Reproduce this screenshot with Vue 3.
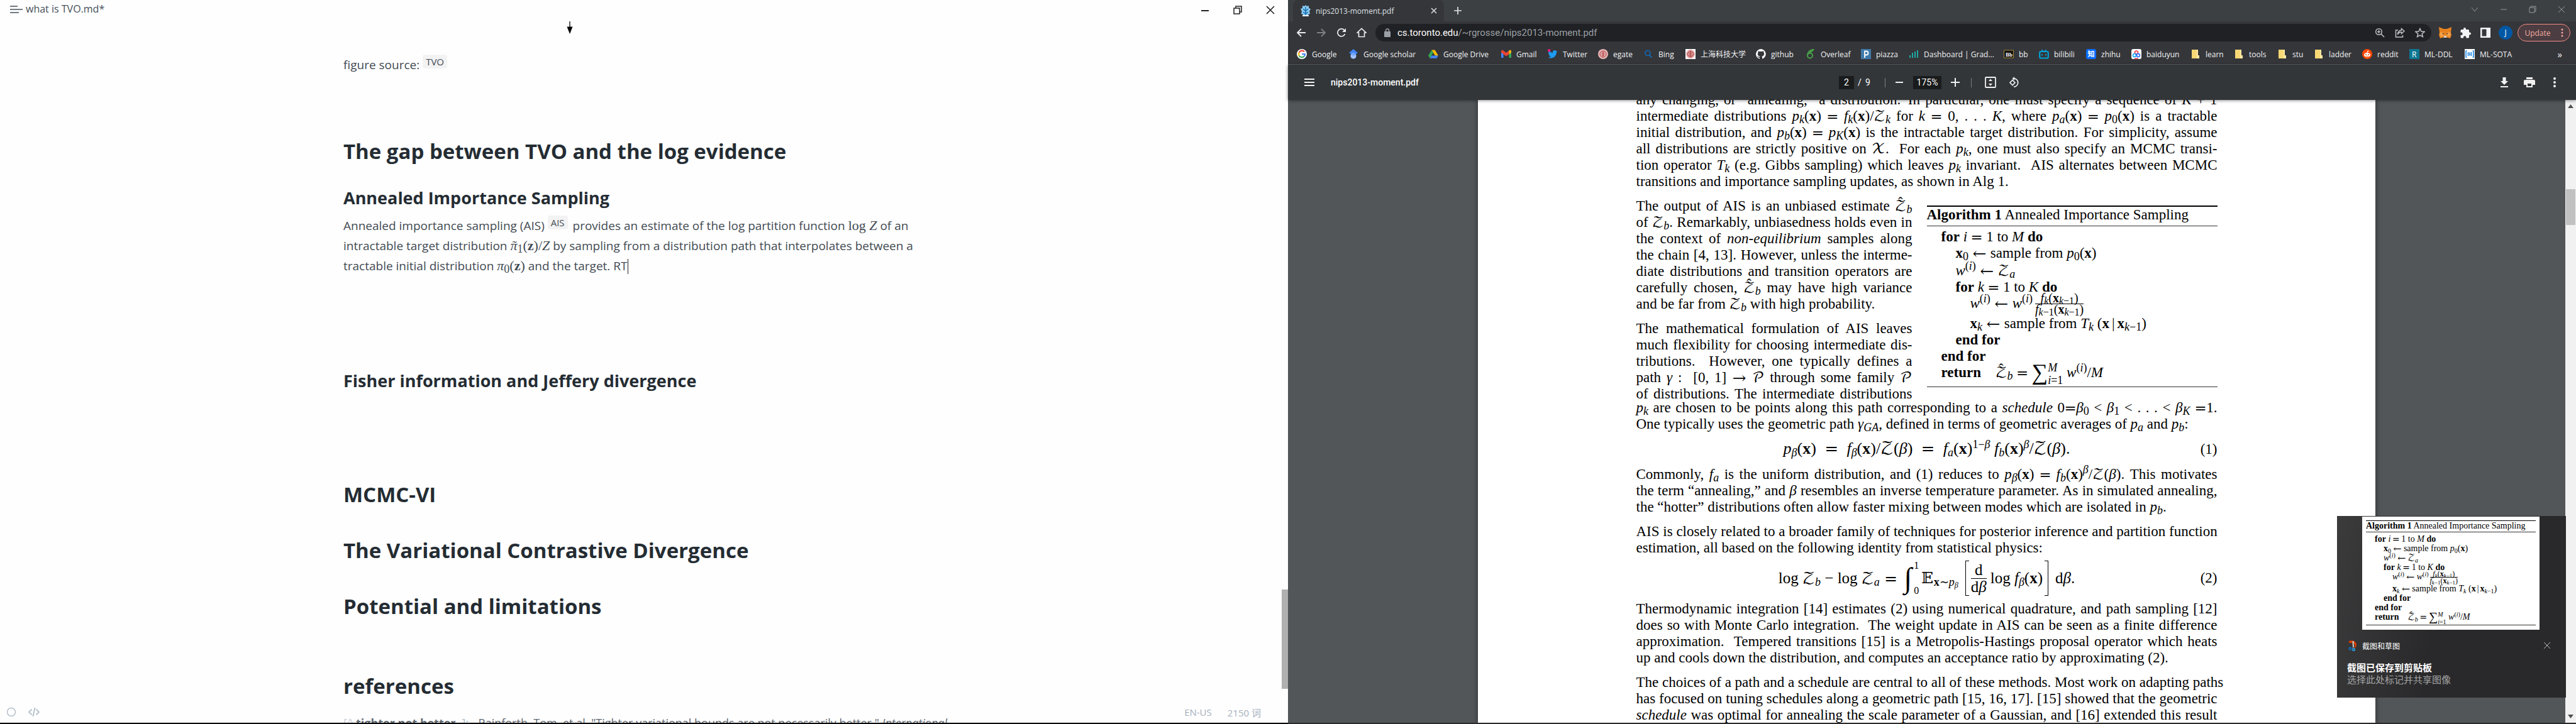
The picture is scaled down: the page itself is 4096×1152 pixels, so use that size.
<script setup>
const bookmarks = [
  { name: 'Google', w: 82, icon: '<circle cx="8" cy="8" r="8" fill="#fff"/><path d="M12 4.4A5 5 0 0 0 3.6 5.6" stroke="#ea4335" stroke-width="2.2" fill="none"/><path d="M3.6 5.6a5 5 0 0 0 0 4.8" stroke="#fbbc05" stroke-width="2.2" fill="none"/><path d="M3.6 10.4a5 5 0 0 0 7.9 1.3" stroke="#34a853" stroke-width="2.2" fill="none"/><path d="M11.5 11.7A5 5 0 0 0 13 8H8" stroke="#4285f4" stroke-width="2.2" fill="none"/>' },
  { name: 'Google scholar', w: 127, icon: '<path d="M8 0l7 6-7 5-7-5z" fill="#4285f4"/><circle cx="8" cy="11" r="4.6" fill="#a0c3ff"/><path d="M3.8 8.8a4.6 4.6 0 0 1 8.4 0L8 11z" fill="#76a7fa"/>' },
  { name: 'Google Drive', w: 116, icon: '<path d="M5.4 1.5h5.2L16 10.6h-5.1z" fill="#fbbc04"/><path d="M5.4 1.5L0 10.6l2.6 4.2L8 5.8z" fill="#34a853"/><path d="M5.1 10.6H16l-2.6 4.2H2.6z" fill="#4285f4"/>' },
  { name: 'Gmail', w: 74, icon: '<path d="M0 3.5V13a1 1 0 0 0 1 1h2.6V6.5z" fill="#4285f4"/><path d="M16 3.5V13a1 1 0 0 1-1 1h-2.6V6.5z" fill="#34a853"/><path d="M0 3.6C0 1.800 2 1.300 3.200 2.200L8 6l4.800-3.800C14 1.300 16 1.800 16 3.600v2L8 11.400 0 5.600z" fill="#ea4335"/><path d="M12.400 2.500C14 1.300 16 1.800 16 3.600v2l-3.600 2.600z" fill="#fbbc04"/>' },
  { name: 'Twitter', w: 80, icon: '<path d="M15.500 4.200l-1.600.8c0 5.500-4 9.500-8.900 9.500-1.600 0-3.200-.5-4.500-1.300 1.700.1 3.200-.4 4.400-1.300-1.300-.1-2.400-1-2.800-2.200h1.200C2 9.300 1 8 1 6.500l1.300.4C1 6 .6 4 1.500 2.600 3.100 4.600 5.300 5.700 8 5.900 7.500 3.800 9 2 11 2c.9 0 1.700.4 2.200 1z" fill="#1d9bf0"/><circle cx="2.200" cy="2.200" r="2.200" fill="#f91880"/>' },
  { name: 'egate', w: 72, icon: '<circle cx="8" cy="8" r="8" fill="#e8b7b7"/><circle cx="8" cy="8" r="5" fill="none" stroke="#a33" stroke-width="1"/><path d="M8 4v8M5.500 6.500h5M5.500 9.500h5" stroke="#a33"/>' },
  { name: 'Bing', w: 67, icon: '<circle cx="7" cy="6.500" r="4" fill="none" stroke="#0f6cbd" stroke-width="1.600"/><path d="M10 9.500l3 4" stroke="#0f6cbd" stroke-width="1.800"/>' },
  { name: '上海科技大学', w: 112, icon: '<path d="M0 0h16v16H0z" fill="#fff"/><circle cx="8" cy="8" r="7" fill="#e3a9a9"/><circle cx="8" cy="8" r="4.500" fill="none" stroke="#a33"/><path d="M8 4v8M5.500 6.500h5M5.500 9.500h5" stroke="#a33"/>' },
  { name: 'github', w: 79, icon: '<path d="M8 0a8 8 0 0 0-2.500 15.600c.4.1.5-.2.5-.4v-1.500c-2.200.5-2.700-1-2.700-1-.4-.9-.9-1.200-.9-1.200-.7-.5.100-.5.100-.5.8.100 1.200.8 1.200.8.7 1.200 1.900.9 2.300.7.100-.5.300-.9.500-1.100-1.800-.2-3.600-.9-3.600-4 0-.9.300-1.600.8-2.100-.1-.2-.4-1 .1-2.100 0 0 .7-.2 2.200.8a7.500 7.500 0 0 1 4 0c1.500-1 2.200-.8 2.200-.8.4 1.100.2 1.900.1 2.100.5.600.8 1.300.8 2.100 0 3.100-1.900 3.800-3.700 4 .3.300.6.800.6 1.500v2.200c0 .2.100.5.500.4A8 8 0 0 0 8 0z" fill="#fff"/>' },
  { name: 'Overleaf', w: 88, icon: '<circle cx="7" cy="10.500" r="4" fill="none" stroke="#46a247" stroke-width="2"/><path d="M3.200 10C3 5 6 2 12.500.8 11 3.500 8.500 4 6.500 6" fill="none" stroke="#46a247" stroke-width="2"/>' },
  { name: 'piazza', w: 76, icon: '<path d="M0 0h16v16H0z" fill="#3e7aab"/><path d="M6 14V3.500h2.500a3 3 0 0 1 0 6H6" fill="none" stroke="#fff" stroke-width="1.800"/>' },
  { name: 'Dashboard | Grad...', w: 151, icon: '<path d="M1 10h2v4H1zM5 6h2v8H5zM9 4h2v10H9zM13 2h2v12h-2z" fill="#1fa8a4"/>' },
  { name: 'bb', w: 56, icon: '<path d="M.5 2h15v12H.5z" fill="#111" stroke="#a98a3c"/><text x="3" y="11.500" font-size="9" font-weight="700" fill="#fff" font-family="Liberation Serif">Bb</text>' },
  { name: 'bilibili', w: 75, icon: '<rect x="1.200" y="4" width="13.600" height="10.500" rx="2" fill="none" stroke="#00a1d6" stroke-width="2.200"/><path d="M4.500 1l2 2.500M11.500 1l-2 2.500M5 8v2.500M11 8v2.500" stroke="#00a1d6" stroke-width="1.800"/>' },
  { name: 'zhihu', w: 72, icon: '<rect width="16" height="16" rx="3" fill="#0a6cff"/><text x="2.500" y="12" font-size="11" font-weight="700" fill="#fff" font-family="Noto Sans CJK SC">知</text>' },
  { name: 'baiduyun', w: 94, icon: '<rect width="16" height="16" rx="3" fill="#fff"/><circle cx="8" cy="5.500" r="2.500" fill="none" stroke="#e34" stroke-width="1.500"/><circle cx="5" cy="10" r="2.500" fill="none" stroke="#06a7ff" stroke-width="1.500"/><circle cx="11" cy="10" r="2.500" fill="none" stroke="#2a6cff" stroke-width="1.500"/><path d="M5 15h6" stroke="#e34" stroke-width="1.500"/>' },
  ...[['learn', 69], ['tools', 69], ['stu', 58], ['ladder', 77]].map(([name, w]) => ({
    name, w, icon: '<path d="M2 1h10v9h2v5H2z" fill="#f8d775"/><path d="M12 1v9h2v5h-4V1z" fill="#ffe9a2"/>',
  })),
  { name: 'reddit', w: 75, icon: '<circle cx="8" cy="8" r="8" fill="#ff4500"/><ellipse cx="8" cy="9.300" rx="5" ry="3.600" fill="#fff"/><circle cx="6" cy="8.800" r="1" fill="#ff4500"/><circle cx="10" cy="8.800" r="1" fill="#ff4500"/><path d="M8 5.800l.7-2.800 2.300.6" stroke="#fff" fill="none"/><path d="M6 11q2 1.200 4 0" stroke="#ff4500" fill="none" stroke-width=".8"/>' },
  { name: 'ML-DDL', w: 88, icon: '<path d="M0 0h16v16H0z" fill="#0c7792"/><text x="4" y="12.500" font-size="12" fill="#fff" font-family="Open Sans">R</text>' },
  { name: 'ML-SOTA', w: 78, icon: '<path d="M0 0h16v16H0z" fill="#fff"/><path d="M3.500 3H2v10h1.500M12.500 3H14v10h-1.500M5.500 5v6M8 5.500v5M10.500 5v6" stroke="#1e88e5" stroke-width="1.600" fill="none"/>' },
]

const algorithm = `
<div class="a-title"><b>Algorithm 1</b> Annealed Importance Sampling</div>
<div class="a-body">
<div class="a-row"><b>for</b> <i>i</i><u>=</u>1 to <i>M</i> <b>do</b></div>
<div class="a-row in1"><b>x</b><sub>0</sub><u>←</u>sample from <i>p</i><sub>0</sub>(<b>x</b>)</div>
<div class="a-row in1 tall"><i>w</i><sup>(<i>i</i>)</sup><u>←</u><em>𝒵</em><sub><i>a</i></sub></div>
<div class="a-row in1"><b>for</b> <i>k</i><u>=</u>1 to <i>K</i> <b>do</b></div>
<div class="a-row in2 deep"><i>w</i><sup>(<i>i</i>)</sup><u>←</u><i>w</i><sup>(<i>i</i>)</sup><span class="frac"><span><i>f</i><sub><i>k</i></sub>(<b>x</b><sub><i>k</i>−1</sub>)</span><span><i>f</i><sub><i>k</i>−1</sub>(<b>x</b><sub><i>k</i>−1</sub>)</span></span></div>
<div class="a-row in2"><b>x</b><sub><i>k</i></sub><u>←</u>sample from <i>T</i><sub><i>k</i></sub> (<b>x</b><s>|</s><b>x</b><sub><i>k</i>−1</sub>)</div>
<div class="a-row in1"><b>end for</b></div>
<div class="a-row"><b>end for</b></div>
<div class="a-row"><b>return</b>&emsp;<span class="hat"><em>𝒵</em></span><sub><i>b</i></sub><u>=</u><span class="sum">∑</span><span class="lim"><span><i>M</i></span><span><i>i</i>=1</span></span> <i>w</i><sup>(<i>i</i>)</sup>/<i>M</i></div>
</div>`
</script>

<template>
  <div class="screen">
    <section class="editor">
      <header class="ed-bar">
        <button class="ed-menu" aria-label="Menu">
          <svg width="20" height="16" viewBox="0 0 20 16"><path d="M0 3h12M0 8h20M0 13h14" stroke="#444f59" stroke-width="1.500" /></svg>
        </button>
        <span class="ed-name">what is TVO.md*</span>
        <div class="ed-win">
          <button aria-label="Minimize"><svg width="16" height="16" viewBox="0 0 16 16"><path d="M2 9h12" stroke="#222" stroke-width="2" /></svg></button>
          <button aria-label="Restore"><svg width="16" height="16" viewBox="0 0 16 16"><path d="M2 5h9v9H2zM5 5V2h9v9h-3" fill="none" stroke="#222" stroke-width="1.500" /></svg></button>
          <button aria-label="Close"><svg width="16" height="16" viewBox="0 0 16 16"><path d="M2 2l12 12M14 2L2 14" stroke="#222" stroke-width="1.600" /></svg></button>
        </div>
      </header>
      <div class="ed-scroll">
        <article>
          <figure><svg width="12" height="20" viewBox="0 0 12 20"><path d="M6 0v10" stroke="#000" stroke-width="1.300" /><path d="M1.500 8.500h9L6 20z" /></svg></figure>
          <p class="source">figure source: <span class="chip">TVO</span></p>
          <h2>The gap between TVO and the log evidence</h2>
          <h3>Annealed Importance Sampling</h3>
          <p class="ais">
            <span>Annealed importance sampling (AIS) <span class="chip">AIS</span> provides an estimate of the log partition function <span class="m">log <i>Z</i></span> of an</span>
            <span>intractable target distribution <span class="m"><span class="tilde"><i>π</i></span><sub>1</sub>(<b>z</b>)/<i>Z</i></span> by sampling from a distribution path that interpolates between a</span>
            <span>tractable initial distribution <span class="m"><i>π</i><sub>0</sub>(<b>z</b>)</span> and the target. RT<span class="caret"></span></span>
          </p>
          <h3 class="fisher">Fisher information and Jeffery divergence</h3>
          <h2>MCMC-VI</h2>
          <h2>The Variational Contrastive Divergence</h2>
          <h2 class="limits">Potential and limitations</h2>
          <h2>references</h2>
          <p class="ref"><span class="mark">[^</span><b>tighter not better</b><span class="mark end">]:</span>Rainforth, Tom, et al. "Tighter variational bounds are not necessarily better." <i>International</i></p>
        </article>
        <div class="ed-thumb"></div>
      </div>
      <footer class="ed-status">
        <button aria-label="Sidebar"><svg width="16" height="16" viewBox="0 0 16 16"><circle cx="8" cy="8" r="6.500" fill="none" stroke="#b7c1cb" stroke-width="1.500" /></svg></button>
        <button aria-label="Source mode"><svg width="18" height="14" viewBox="0 0 18 14"><path d="M5.500 2.500L1 7l4.500 4.500M12.500 2.500L17 7l-4.500 4.500M10.500 0L7.500 14" fill="none" stroke="#a3b0bc" stroke-width="1.500" /></svg></button>
        <span class="lang">EN-US</span>
        <span>2150 词</span>
      </footer>
    </section>

    <section class="browser">
      <header class="tabs">
        <div class="tab">
          <svg width="18" height="18" viewBox="0 0 18 18"><path d="M9 0l2 2 3-1v4l3 1-2 4 1 4-3 1v3H5v-3l-3-1 1-4-2-4 3-1V1l3 1z" fill="#8ccbf0" /><path d="M9 3v13M5 6l4 4 4-4M5 11l4 3 4-3" stroke="#1670b0" stroke-width="1.500" fill="none" /><path d="M4 16h10v2H4z" fill="#eef" /></svg>
          <span>nips2013-moment.pdf</span>
          <button aria-label="Close tab"><svg width="10" height="10" viewBox="0 0 10 10"><path d="M1 1l8 8M9 1L1 9" stroke="#dfe1e5" stroke-width="1.500" /></svg></button>
        </div>
        <button class="newtab" aria-label="New tab"><svg width="14" height="14" viewBox="0 0 14 14"><path d="M7 1v12M1 7h12" stroke="#dfe1e5" stroke-width="1.700" /></svg></button>
        <div class="win">
          <button aria-label="Search tabs"><svg width="12" height="12" viewBox="0 0 12 12"><path d="M1 3l5 6 5-6" /></svg></button>
          <button aria-label="Minimize"><svg width="12" height="12" viewBox="0 0 12 12"><path d="M1 6h10" /></svg></button>
          <button aria-label="Restore"><svg width="12" height="12" viewBox="0 0 12 12"><path d="M1 3h8v8H1zM3 3V1h8v8H9" /></svg></button>
          <button aria-label="Close"><svg width="12" height="12" viewBox="0 0 12 12"><path d="M1 1l10 10M11 1L1 11" /></svg></button>
        </div>
      </header>

      <nav class="toolbar">
        <button aria-label="Back"><svg width="16" height="16" viewBox="0 0 16 16"><path d="M15 8H2M8 2L2 8l6 6" fill="none" stroke="#e8eaed" stroke-width="1.800" /></svg></button>
        <button aria-label="Forward"><svg width="16" height="16" viewBox="0 0 16 16"><path d="M1 8h13M8 2l6 6-6 6" fill="none" stroke="#7d8084" stroke-width="1.800" /></svg></button>
        <button aria-label="Reload"><svg width="16" height="16" viewBox="0 0 16 16"><path d="M13.500 10A6 6 0 1 1 12.500 4l1.500 2" fill="none" stroke="#e8eaed" stroke-width="1.800" /><path d="M15 1v6H9z" fill="#e8eaed" /></svg></button>
        <button aria-label="Home"><svg width="16" height="16" viewBox="0 0 16 16"><path d="M1 8l7-6.500L15 8h-2.500v6.500h-9V8z" fill="none" stroke="#e8eaed" stroke-width="1.700" /></svg></button>
        <div class="omni">
          <svg width="12" height="14" viewBox="0 0 12 14"><path d="M1 5h10v9H1z" fill="#9aa0a6" /><path d="M3.500 5V3.500a2.500 2.500 0 0 1 5 0V5" fill="none" stroke="#9aa0a6" stroke-width="1.500" /></svg>
          <a href="#"><b>cs.toronto.edu</b>/~rgrosse/nips2013-moment.pdf</a>
          <button aria-label="Zoom"><svg width="16" height="16" viewBox="0 0 16 16"><circle cx="6.500" cy="6.500" r="4.800" /><path d="M10 10l5 5M4 6.500h5M6.500 4v5" /></svg></button>
          <button aria-label="Share"><svg width="16" height="16" viewBox="0 0 16 16"><path d="M5 4H1.500v11h11v-3" /><path d="M10.500 1.500L15 5.500l-4.500 4v-2.500C7.500 7 5.500 8.500 4.500 11 4.500 7 7 4.500 10.500 4z" /></svg></button>
          <button aria-label="Bookmark"><svg width="16" height="16" viewBox="0 0 16 16"><path d="M8 1.500l2 4.600 5 .4-3.800 3.200 1.200 4.800L8 12l-4.400 2.500 1.200-4.800L1 6.500l5-.4z" /></svg></button>
        </div>
        <button aria-label="MetaMask"><svg width="20" height="18" viewBox="0 0 20 18"><path d="M0 0l7.500 3h5L20 0l-1 9 1 4-2 5-5-1.500h-6L2 18l-2-5 1-4z" fill="#e8821e" /><path d="M1 9l5-1 2 5-5 3zM19 9l-5-1-2 5 5 3z" fill="#f6a14a" /><path d="M5 9.500l3 1-1 1.500zM15 9.500l-3 1 1 1.500z" fill="#333" /><path d="M8 14h4l.5 3h-5z" fill="#d8cfc8" /></svg></button>
        <button aria-label="Extensions"><svg width="18" height="18" viewBox="0 0 18 18"><path d="M16 8.500h-1V5.500A1.500 1.500 0 0 0 13.500 4H10V3a2 2 0 0 0-4 0v1H3a1.500 1.500 0 0 0-1.500 1.500V8.500h1a2.200 2.200 0 0 1 0 4.400h-1V16A1.500 1.500 0 0 0 3 17.500h3v-1a2.200 2.200 0 0 1 4.400 0v1h3.100A1.500 1.500 0 0 0 15 16v-3.500h1a2 2 0 0 0 0-4z" fill="#f1f3f4" /></svg></button>
        <button aria-label="Side panel"><svg width="16" height="16" viewBox="0 0 16 16"><path d="M0 0h16v16H0zM2.500 2.500v11h7v-11z" fill="#f1f3f4" fill-rule="evenodd" /></svg></button>
        <button aria-label="Profile"><span class="avatar">J</span></button>
        <button class="update">Update<svg width="4" height="14" viewBox="0 0 4 14"><circle cx="2" cy="2" r="1.500" /><circle cx="2" cy="7" r="1.500" /><circle cx="2" cy="12" r="1.500" /></svg></button>
      </nav>

      <nav class="marks">
        <a v-for="b in bookmarks" :key="b.name" href="#" :style="{ width: b.w + 'px' }">
          <svg width="16" height="16" viewBox="0 0 16 16" v-html="b.icon"></svg><span>{{ b.name }}</span>
        </a>
        <button class="more">»</button>
      </nav>

      <div class="pdfbar">
        <div class="pb-left">
          <button aria-label="Menu"><svg width="16" height="12" viewBox="0 0 16 12"><path d="M0 1h16M0 6h16M0 11h16" stroke="#f1f1f1" stroke-width="2" /></svg></button>
          <span>nips2013-moment.pdf</span>
        </div>
        <div class="pb-mid">
          <input class="page" value="2" aria-label="Page"><span class="slash">/</span><span class="nine">9</span>
          <i class="div"></i>
          <button class="z" aria-label="Zoom out"><svg width="12" height="12" viewBox="0 0 12 12"><path d="M0 6h12" stroke="#f1f1f1" stroke-width="2" /></svg></button>
          <input class="pct" value="175%" aria-label="Zoom level">
          <button class="z" aria-label="Zoom in"><svg width="14" height="14" viewBox="0 0 14 14"><path d="M0 7h14M7 0v14" stroke="#f1f1f1" stroke-width="2" /></svg></button>
          <i class="div"></i>
          <button class="t" aria-label="Fit"><svg width="18" height="18" viewBox="0 0 18 18"><rect x="1" y="1" width="16" height="16" rx="1" fill="none" stroke="#f1f1f1" stroke-width="1.800" /><path d="M9 3.500l3 3.500H6zM9 14.500l3-3.500H6z" fill="#f1f1f1" /></svg></button>
          <button class="t" aria-label="Rotate"><svg width="18" height="18" viewBox="0 0 18 18"><path d="M7 5.500L11 9.500l-4 4-4-4z" fill="none" stroke="#f1f1f1" stroke-width="1.700" /><path d="M9 2.800a6.700 6.700 0 0 1 0 13.400" fill="none" stroke="#f1f1f1" stroke-width="1.700" /><path d="M10 0v6L6.500 3z" fill="#f1f1f1" /></svg></button>
        </div>
        <div class="pb-right">
          <button aria-label="Download"><svg width="16" height="16" viewBox="0 0 16 16"><path d="M5.500 0h5v6H14l-6 6-6-6h3.500zM2 14h12v2H2z" /></svg></button>
          <button aria-label="Print"><svg width="18" height="16" viewBox="0 0 18 16"><path d="M4 0h10v3H4zM2 4h14a2 2 0 0 1 2 2v6h-4v4H4v-4H0V6a2 2 0 0 1 2-2zm4 6v4h6v-4z" /></svg></button>
          <button aria-label="More"><svg width="4" height="16" viewBox="0 0 4 16"><circle cx="2" cy="2" r="2" /><circle cx="2" cy="8" r="2" /><circle cx="2" cy="14" r="2" /></svg></button>
        </div>
      </div>

      <div class="viewer">
        <main class="sheet">
          <div class="col m">
            <p>
              <span>any changing, or “annealing,” a distribution.&ensp;In particular, one must specify a sequence of <i>K</i> + 1</span>
              <span>intermediate distributions <i>p</i><sub><i>k</i></sub>(<b>x</b>) <u>=</u> <i>f</i><sub><i>k</i></sub>(<b>x</b>)/<em>𝒵</em><sub><i>k</i></sub> for <i>k</i> <u>=</u> 0, . . . <i>K</i>, where <i>p</i><sub><i>a</i></sub>(<b>x</b>) <u>=</u> <i>p</i><sub>0</sub>(<b>x</b>) is a tractable</span>
              <span>initial distribution, and <i>p</i><sub><i>b</i></sub>(<b>x</b>) <u>=</u> <i>p</i><sub><i>K</i></sub>(<b>x</b>) is the intractable target distribution. For simplicity, assume</span>
              <span>all distributions are strictly positive on <em>𝒳</em>. &nbsp;For each <i>p</i><sub><i>k</i></sub>, one must also specify an MCMC transi-</span>
              <span>tion operator <i>T</i><sub><i>k</i></sub> (e.g. Gibbs sampling) which leaves <i>p</i><sub><i>k</i></sub> invariant. &nbsp;AIS alternates between MCMC</span>
              <span class="last">transitions and importance sampling updates, as shown in Alg 1.</span>
            </p>
            <div class="split">
              <div class="narrow">
                <p>
                  <span>The output of AIS is an unbiased estimate <span class="hat"><em>𝒵</em></span><sub><i>b</i></sub></span>
                  <span>of <em>𝒵</em><sub><i>b</i></sub>. Remarkably, unbiasedness holds even in</span>
                  <span>the context of <i>non-equilibrium</i> samples along</span>
                  <span>the chain [4, 13]. However, unless the interme-</span>
                  <span>diate distributions and transition operators are</span>
                  <span>carefully chosen, <span class="hat"><em>𝒵</em></span><sub><i>b</i></sub> may have high variance</span>
                  <span class="last">and be far from <em>𝒵</em><sub><i>b</i></sub> with high probability.</span>
                </p>
                <p class="flush">
                  <span>The mathematical formulation of AIS leaves</span>
                  <span>much flexibility for choosing intermediate dis-</span>
                  <span>tributions. &nbsp;However, one typically defines a</span>
                  <span>path <i>γ</i> :&nbsp; [0, 1] <u>→</u> <em>𝒫</em> through some family <em>𝒫</em></span>
                  <span>of distributions. The intermediate distributions</span>
                </p>
              </div>
              <div class="algo" v-html="algorithm"></div>
            </div>
            <p>
              <span><i>p</i><sub><i>k</i></sub> are chosen to be points along this path corresponding to a <i>schedule</i> 0<u>=</u><i>β</i><sub>0</sub> &lt; <i>β</i><sub>1</sub> &lt; . . . &lt; <i>β</i><sub><i>K</i></sub> <u>=</u>1.</span>
              <span class="last">One typically uses the geometric path <i>γ</i><sub><i>GA</i></sub>, defined in terms of geometric averages of <i>p</i><sub><i>a</i></sub> and <i>p</i><sub><i>b</i></sub>:</span>
            </p>
            <div class="eq">
              <div><i>p</i><sub><i>β</i></sub>(<b>x</b>)<u>=</u><i>f</i><sub><i>β</i></sub>(<b>x</b>)/<em>𝒵</em>(<i>β</i>)<u>=</u><i>f</i><sub><i>a</i></sub>(<b>x</b>)<sup>1−<i>β</i></sup> <i>f</i><sub><i>b</i></sub>(<b>x</b>)<sup><i>β</i></sup>/<em>𝒵</em>(<i>β</i>).</div>
              <div>(1)</div>
            </div>
            <p>
              <span>Commonly, <i>f</i><sub><i>a</i></sub> is the uniform distribution, and (1) reduces to <i>p</i><sub><i>β</i></sub>(<b>x</b>) <u>=</u> <i>f</i><sub><i>b</i></sub>(<b>x</b>)<sup><i>β</i></sup>/<em>𝒵</em>(<i>β</i>). This motivates</span>
              <span>the term “annealing,” and <i>β</i> resembles an inverse temperature parameter. As in simulated annealing,</span>
              <span class="last">the “hotter” distributions often allow faster mixing between modes which are isolated in <i>p</i><sub><i>b</i></sub>.</span>
            </p>
            <p class="tight">
              <span class="full">AIS is closely related to a broader family of techniques for posterior inference and partition function</span>
              <span class="last">estimation, all based on the following identity from statistical physics:</span>
            </p>
            <div class="eq big">
              <div>
                <span>log <em>𝒵</em><sub><i>b</i></sub> − log <em>𝒵</em><sub><i>a</i></sub><u>=</u></span>
                <span class="int">∫</span><span class="bounds"><span>1</span><span>0</span></span>
                <span><em>𝔼</em><sub><b>x</b>∼<i>p</i><small><i>β</i></small></sub></span>
                <span class="brk"><span class="dfrac"><span>d</span><span>d<i>β</i></span></span><span>log <i>f</i><sub><i>β</i></sub>(<b>x</b>)</span></span>
                <span>d<i>β</i>.</span>
              </div>
              <div>(2)</div>
            </div>
            <p>
              <span>Thermodynamic integration [14] estimates (2) using numerical quadrature, and path sampling [12]</span>
              <span>does so with Monte Carlo integration. &nbsp;The weight update in AIS can be seen as a finite difference</span>
              <span>approximation. &nbsp;Tempered transitions [15] is a Metropolis-Hastings proposal operator which heats</span>
              <span class="last">up and cools down the distribution, and computes an acceptance ratio by approximating (2).</span>
            </p>
            <p>
              <span class="full">The choices of a path and a schedule are central to all of these methods. Most work on adapting paths</span>
              <span>has focused on tuning schedules along a geometric path [15, 16, 17]. [15] showed that the geometric</span>
              <span><i>schedule</i> was optimal for annealing the scale parameter of a Gaussian, and [16] extended this result</span>
            </p>
          </div>
        </main>
        <div class="vbar">
          <svg width="17" height="20" viewBox="0 0 17 20"><path d="M8.500 7l4.500 6H4z" fill="#505050" /></svg>
          <div class="vthumb"></div>
          <svg width="17" height="20" viewBox="0 0 17 20"><path d="M8.500 13l4.500-6H4z" fill="#505050" /></svg>
        </div>
      </div>
    </section>

    <aside class="toast">
      <div class="shot"><div class="algo mini m" v-html="algorithm"></div></div>
      <div class="app">
        <svg width="14" height="17" viewBox="0 0 14 17"><path d="M1 1c6-2 12 1 12 6 0 3-2 5-4 5l1-3c1-4-3-5-9-5z" fill="#d83b01" /><path d="M6.500 1h2l.5 9-2 2z" fill="#ccc" /><circle cx="3" cy="13" r="1.800" fill="none" stroke="#0f6cbd" stroke-width="1.500" /><circle cx="8.500" cy="14.500" r="1.800" fill="none" stroke="#2aa5ea" stroke-width="1.500" /></svg>
        <span>截图和草图</span>
        <button aria-label="Dismiss"><svg width="12" height="12" viewBox="0 0 12 12"><path d="M1 1l10 10M11 1L1 11" stroke="#bbb" /></svg></button>
      </div>
      <strong>截图已保存到剪贴板</strong>
      <span class="sub">选择此处标记并共享图像</span>
    </aside>
    <div class="edge"></div>
    <div class="edge right"></div>
  </div>
</template>

<style>
body { overflow: hidden; background: #000; }
.m i, .m b { font-family: inherit; }
.m em { font: normal 400 1em "DejaVu Math TeX Gyre", serif; line-height: 0; }
.m sub, .m sup { font-size: 18px; line-height: 0; vertical-align: -4px; }
.m sup { vertical-align: 9px; }
.m u { font-family: "DejaVu Math TeX Gyre", serif; line-height: 0; text-decoration: none; padding: 0 6px; }
.m s { text-decoration: none; padding: 0 4px; }
.m .hat, .m .tilde { position: relative; display: inline-block; }
.m .hat::before { content: "ˆ"; position: absolute; left: 5px; top: -5px; }
.m .tilde::before { content: "˜"; position: absolute; left: 3px; top: 0; }

.algo { --indent: 23px; border-top: 2px solid #000; border-bottom: 1px solid #333; font: 23px/26px "Liberation Serif", serif; color: #000; white-space: nowrap; }
.a-title { padding-bottom: 4px; border-bottom: 1px solid #333; }
.a-body { padding: 4px 0 9px var(--indent); }
.a-row { height: 26px; }
.a-row.in1 { padding-left: var(--indent); }
.a-row.in2 { padding-left: calc(var(--indent) * 2); }
.a-row.tall { padding-top: 2px; }
.a-row.deep { height: 32px; }
.algo .frac, .algo .lim { display: inline-flex; flex-direction: column; vertical-align: 9px; margin: -6px 0 -20px 4px; font-size: 20px; line-height: 17px; text-align: center; }
.algo .frac > span:first-child { border-bottom: 1px solid #000; }
.algo .frac sub { font-size: 16px; vertical-align: -3px; }
.algo .lim { margin-left: 0; font-size: 18px; line-height: 20px; text-align: left; }
.algo .sum { font-size: 36px; line-height: 0; vertical-align: -4px; }

.algo.mini { --indent: 14px; border-top-width: 1px; font-size: 14px; line-height: 15px; }
.mini .a-title { padding-bottom: 2px; }
.mini .a-body { padding-top: 3px; padding-bottom: 5px; }
.mini .a-row { height: 15px; }
.mini .a-row.tall { padding-top: 0; }
.mini .a-row.deep { height: 19px; }
.mini.m sub, .mini.m sup { font-size: 10px; vertical-align: -3px; }
.mini.m sup { vertical-align: 5px; }
.mini.m u { padding: 0 3px; }
.mini.m s { padding: 0 2px; }
.mini.m .hat::before { left: 3px; top: -3px; }
.algo.mini .frac, .algo.mini .lim { vertical-align: 5px; margin: -4px 0 -12px 2px; font-size: 12px; line-height: 10px; }
.algo.mini .frac sub { font-size: 9px; vertical-align: -2px; }
.algo.mini .lim { margin-left: 0; font-size: 10px; line-height: 12px; }
.algo.mini .sum { font-size: 20px; vertical-align: -2px; }
</style>

<style scoped>
.screen { position: relative; display: grid; grid-template: minmax(0, 1fr) 2px / minmax(0, 1fr) minmax(0, 1fr); height: 100vh; overflow: hidden; font-family: "Open Sans", "Noto Sans CJK SC", sans-serif; }
button { border: 0; padding: 0; margin: 0; background: none; font: inherit; color: inherit; display: flex; align-items: center; justify-content: center; }
a { color: inherit; text-decoration: none; }
svg { flex: none; }
.edge { background: #000; }
.edge.right { background: #2a2a2d; }

.editor { position: relative; display: flex; flex-direction: column; min-height: 0; background: #fefefe; color: #434b53; }
.ed-bar { display: flex; align-items: flex-start; height: 34px; flex: none; padding-left: 16px; }
.ed-menu { height: 30px; }
.ed-name { margin-left: 5px; font-size: 16px; line-height: 28px; color: #444f59; }
.ed-win { display: flex; margin-left: auto; padding-right: 2px; }
.ed-win button { width: 52px; height: 32px; }
.ed-scroll { position: relative; flex: 1; min-height: 0; overflow: hidden; }
article { max-width: 956px; margin: 0 auto; font-size: 19px; line-height: 32px; white-space: nowrap; }
figure { margin: 0; height: 53px; display: flex; padding-left: 354px; }
p, h2, h3 { margin: 0; }
h2 { font-size: 33px; line-height: 44px; margin-top: 45px; color: #242c33; }
h3 { font-size: 27px; line-height: 36px; margin-top: 34px; color: #242c33; }
.source { margin-bottom: 100px; }
.chip { display: inline-block; padding: 0 5px; margin-right: 3px; border-radius: 4px; background: #f3f3f3; font-size: 15px; line-height: 22px; vertical-align: 6px; }
.ais { margin: 10px 0 149px; }
.ais > span { display: block; height: 32px; }
.ais .m { font: 22px/1 "Liberation Serif", serif; }
.caret { display: inline-block; width: 1px; height: 24px; margin-bottom: -6px; background: #222; }
.fisher { margin-bottom: 141px; }
.limits { margin-bottom: 83px; }
.ref { margin-top: 20px; font-size: 18px; color: #5f6870; }
.mark { display: inline-block; width: 20px; color: #c8cdd2; }
.mark.end { width: 26px; padding-left: 10px; color: #a9bccb; }
.ed-thumb { position: absolute; right: 0; top: 904px; width: 10px; height: 158px; background: #b0b0b0; }
.ed-status { position: absolute; left: 10px; right: 43px; bottom: 3px; display: flex; align-items: center; height: 28px; font-size: 15px; color: #a4b0bc; }
.ed-status button { width: 16px; margin-right: 20px; }
.lang { margin-left: auto; margin-right: 25px; }

.browser { display: flex; flex-direction: column; min-height: 0; min-width: 0; background: #35363a; color: #e8eaed; }
.tabs { display: flex; align-items: center; height: 34px; flex: none; padding-left: 8px; background: #3c4043; }
.tab { display: flex; align-items: center; width: 240px; height: 34px; padding: 0 11px; box-sizing: border-box; border-radius: 8px 8px 0 0; background: #35363a; font-size: 12px; color: #dfe1e5; }
.tab span { flex: 1; margin-left: 7px; }
.newtab { width: 44px; height: 34px; }
.win { display: flex; align-self: flex-start; margin-left: auto; }
.win button { width: 46px; height: 29px; }
.win path { fill: none; stroke: #94979a; stroke-width: 1; }
.toolbar { display: flex; align-items: center; height: 36px; flex: none; padding: 0 9px 0 5px; }
.toolbar button { width: 32px; height: 28px; flex: none; }
.omni { display: flex; align-items: center; flex: 1; height: 28px; margin: 0 6px; padding: 0 2px 0 13px; border-radius: 14px; background: #202124; font: 15px Roboto, sans-serif; color: #9aa0a6; }
.omni a { flex: 1; margin-left: 10px; }
.omni b { font-weight: 400; color: #fff; }
.omni button path, .omni button circle { fill: none; stroke: #bdc1c6; stroke-width: 1.500; }
.avatar { width: 22px; height: 22px; border-radius: 50%; background: #0057a4; color: #fff; font-size: 12px; line-height: 22px; text-align: center; }
.toolbar .update { width: 84px; margin-left: 3px; box-sizing: border-box; gap: 16px; border: 1px solid #f28b82; border-radius: 14px; background: #4b3d41; color: #f5a9a2; font-size: 12px; }
.update svg { fill: #f5a9a2; }
.marks { display: flex; align-items: center; height: 32px; flex: none; padding: 0 22px 0 14px; border-bottom: 1px solid #5f6368; font-size: 12px; color: #f1f3f4; white-space: nowrap; }
.marks a { display: flex; align-items: center; gap: 8px; flex: none; }
.more { margin-left: auto; font-size: 15px; }
.pdfbar { position: relative; z-index: 1; display: grid; grid-template-columns: 1fr auto 1fr; align-items: center; height: 56px; flex: none; background: #323639; box-shadow: 0 1px 5px rgba(0, 0, 0, .45); color: #fff; font: 14px Roboto, sans-serif; }
.pb-left { display: flex; align-items: center; padding-left: 26px; gap: 26px; font-weight: 500; }
.pb-mid { display: flex; align-items: center; }
.pb-mid input { border: 0; padding: 0; box-sizing: border-box; height: 21px; background: #191b1c; color: #fff; text-align: center; font: 14px Roboto, sans-serif; }
.page { width: 24px; }
.slash { width: 18px; text-align: center; }
.nine { width: 8px; }
.div { width: 1px; height: 15px; margin-left: 23px; background: #7d8083; }
.pct { width: 45px; }
.z { width: 44px; height: 24px; }
.z + .div { margin-left: 3px; }
.t { width: 38px; height: 24px; margin-right: -1px; }
.div + .t { margin-left: 11px; }
.pb-right { display: flex; justify-content: flex-end; padding-right: 14px; }
.pb-right button { width: 40px; height: 24px; }
.pb-right svg { fill: #f1f1f1; }

.viewer { display: flex; flex: 1; min-height: 0; overflow: hidden; background: #525659; }
.sheet { width: 1427px; margin: 0 auto; background: #fff; box-shadow: 0 0 8px rgba(0, 0, 0, .5); }
.col { width: 924px; margin: -13px auto 0; font: 23px/26px "Liberation Serif", serif; color: #000; }
.col p { margin: 0 0 13px; white-space: nowrap; }
.col .tight { margin-bottom: 7px; }
.col p u { padding: 0; }
.narrow .flush { margin: 0; }
.col p > span { display: block; height: 26px; text-align: justify; text-align-last: justify; white-space: normal; }
.col p > .last { text-align-last: left; }
.col p > .full { white-space: nowrap; }
.split { display: flex; justify-content: space-between; align-items: flex-start; height: 321px; }
.narrow { width: 439px; }
.split .algo { width: 462px; margin-top: 12px; }
.eq { display: grid; grid-template-columns: 1fr auto 1fr; align-items: baseline; margin-bottom: 14px; }
.eq > :first-child { grid-column: 2; white-space: nowrap; font-size: 26px; }
.eq > :last-child { text-align: right; }
.eq u { padding: 0 14px; }
.big { align-items: center; height: 56px; margin-bottom: 8px; }
.big > :first-child { display: flex; align-items: center; gap: 3px; font-size: 25px; }
.big u { padding: 0 8px; }
.int { font-size: 46px; line-height: 56px; }
.bounds { display: flex; flex-direction: column; justify-content: space-between; height: 56px; font-size: 16px; line-height: 16px; }
.brk { position: relative; display: flex; align-items: center; gap: 6px; height: 56px; margin: 0 8px; padding: 0 9px; }
.brk::before, .brk::after { content: ""; position: absolute; top: 0; width: 5px; height: 54px; border: 1px solid #000; }
.brk::before { left: 0; border-right: 0; }
.brk::after { right: 0; border-left: 0; }
.dfrac { display: flex; flex-direction: column; text-align: center; }
.dfrac > :first-child { border-bottom: 1px solid #000; }
small { font-size: 12px; vertical-align: -3px; }
.vbar { display: flex; flex-direction: column; align-items: center; width: 17px; background: #f1f1f1; }
.vthumb { width: 15px; height: 57px; margin: 122px 0 auto; background: #c1c1c1; }

.toast { position: absolute; right: 16px; bottom: 42px; z-index: 2; width: 364px; height: 289px; box-sizing: border-box; padding: 1px 24px 0 16px; display: flex; flex-direction: column; background: linear-gradient(100deg, #3b3b3c, #29292b 45%); color: #fff; font: 15px/19px "Noto Sans CJK SC", sans-serif; }
.shot { align-self: center; width: 282px; height: 180px; margin-left: 6px; box-sizing: border-box; padding: 6px; background: #fff; }
.app { display: flex; align-items: center; height: 18px; margin: 16px 0 16px; padding-left: 2px; font-size: 12px; }
.app span { margin-left: 8px; }
.app button { margin-left: auto; }
strong { font-weight: 700; }
.sub { color: #a5a5a5; }
</style>
